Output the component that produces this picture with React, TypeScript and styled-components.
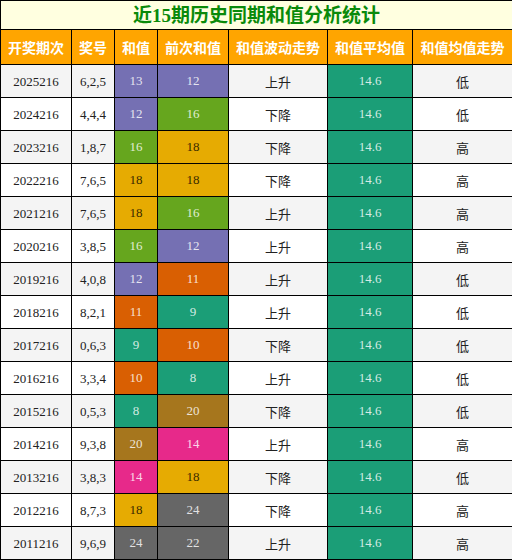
import React from "react";
import styled, { createGlobalStyle } from "styled-components";

const Global = createGlobalStyle`
  html, body { margin: 0; padding: 0; background: #fff; }
  body { font-family: "Liberation Serif", "Noto Sans CJK SC", serif; }
`;

const Table = styled.table`
  width: 512px;
  border-collapse: collapse;
  table-layout: fixed;
  font-family: "Liberation Serif", "Noto Sans CJK SC", serif;
`;

const TitleCell = styled.th`
  height: 28px;
  padding: 0;
  border: 1px solid #000;
  background: #ffffe0;
  color: #0a8a0a;
  font-size: 19px;
  font-weight: bold;
  text-align: center;
  vertical-align: middle;
  line-height: 1;
`;

const HeadCell = styled.th`
  height: 34px;
  padding: 0;
  border: 1px solid #000;
  background: #ffa500;
  color: #fff;
  font-family: "Noto Sans CJK SC", sans-serif;
  font-size: 14px;
  font-weight: bold;
  text-align: center;
  vertical-align: middle;
  line-height: 1;
`;

const Row = styled.tr<{ $alt: boolean }>`
  background: ${(p) => (p.$alt ? "#f4f4f4" : "#ffffff")};
`;

const Cell = styled.td<{ $cjk?: boolean }>`
  height: 32px;
  padding: 0;
  border: 1px solid #000;
  text-align: center;
  vertical-align: middle;
  color: #222;
  font-size: 13px;
  line-height: 1;
  font-family: ${(p) =>
    p.$cjk ? `"Noto Sans CJK SC", sans-serif` : `"Liberation Serif", serif`};
`;

const ValueCell = styled(Cell)<{ $bg: string; $dark: boolean }>`
  background: ${(p) => p.$bg};
  color: ${(p) => (p.$dark ? "#3a2a00" : "rgba(255,255,255,0.82)")};
`;

const Lift = styled.span`
  position: relative;
  top: -1px;
`;

const colorFor = (v: number): string => {
  if (v <= 9) return "#1b9e77";
  if (v <= 11) return "#d95f02";
  if (v <= 13) return "#7570b3";
  if (v <= 15) return "#e7298a";
  if (v <= 17) return "#66a61e";
  if (v <= 19) return "#e6ab02";
  if (v <= 21) return "#a6761d";
  return "#666666";
};

type R = [string, string, number, number, string, string];
const rows: R[] = [
  ["2025216", "6,2,5", 13, 12, "上升", "低"],
  ["2024216", "4,4,4", 12, 16, "下降", "低"],
  ["2023216", "1,8,7", 16, 18, "下降", "高"],
  ["2022216", "7,6,5", 18, 18, "下降", "高"],
  ["2021216", "7,6,5", 18, 16, "上升", "高"],
  ["2020216", "3,8,5", 16, 12, "上升", "高"],
  ["2019216", "4,0,8", 12, 11, "上升", "低"],
  ["2018216", "8,2,1", 11, 9, "上升", "低"],
  ["2017216", "0,6,3", 9, 10, "下降", "低"],
  ["2016216", "3,3,4", 10, 8, "上升", "低"],
  ["2015216", "0,5,3", 8, 20, "下降", "低"],
  ["2014216", "9,3,8", 20, 14, "上升", "高"],
  ["2013216", "3,8,3", 14, 18, "下降", "低"],
  ["2012216", "8,7,3", 18, 24, "下降", "高"],
  ["2011216", "9,6,9", 24, 22, "上升", "高"],
];

const widths = [71, 43, 43, 71, 99, 85, 100];
const heads = ["开奖期次", "奖号", "和值", "前次和值", "和值波动走势", "和值平均值", "和值均值走势"];

const Val = ({ v }: { v: number }) => (
  <ValueCell $bg={colorFor(v)} $dark={v >= 18 && v <= 19}>
    <Lift>{v}</Lift>
  </ValueCell>
);

export default function App() {
  return (
    <>
      <Global />
      <Table>
        <colgroup>
          {widths.map((w, i) => (
            <col key={i} style={{ width: w }} />
          ))}
        </colgroup>
        <thead>
          <tr>
            <TitleCell colSpan={7}>近15期历史同期和值分析统计</TitleCell>
          </tr>
          <tr>
            {heads.map((h) => (
              <HeadCell key={h}>{h}</HeadCell>
            ))}
          </tr>
        </thead>
        <tbody>
          {rows.map((r, i) => (
            <Row key={r[0]} $alt={i % 2 === 0}>
              <Cell>{r[0]}</Cell>
              <Cell>{r[1]}</Cell>
              <Val v={r[2]} />
              <Val v={r[3]} />
              <Cell $cjk>{r[4]}</Cell>
              <ValueCell $bg="#1b9e77" $dark={false}>
                <Lift>14.6</Lift>
              </ValueCell>
              <Cell $cjk>{r[5]}</Cell>
            </Row>
          ))}
        </tbody>
      </Table>
    </>
  );
}
